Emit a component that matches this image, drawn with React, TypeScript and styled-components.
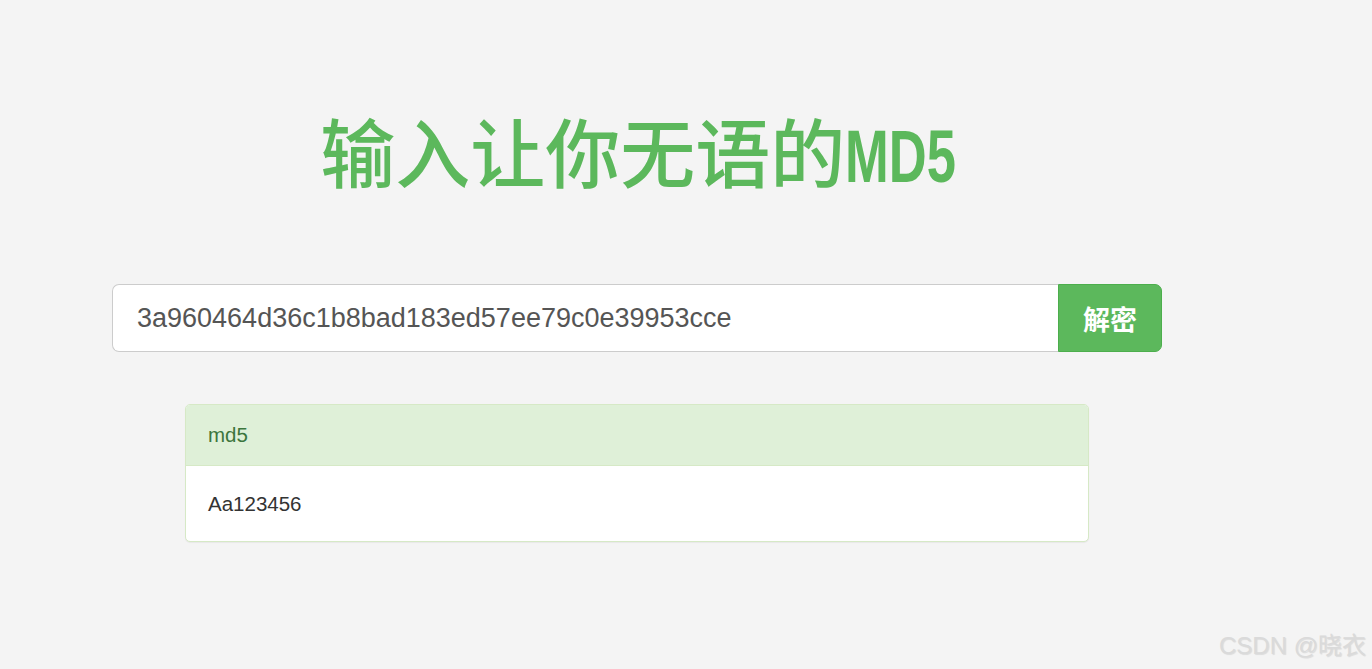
import React from "react";
import styled, { createGlobalStyle } from "styled-components";

const Global = createGlobalStyle`
  html, body { margin: 0; padding: 0; background: #f4f4f4; }
  body { font-family: "Liberation Sans", Arial, "Noto Sans CJK SC", sans-serif; }
`;

const Page = styled.div`
  width: 1372px;
  height: 669px;
  position: relative;
  overflow: hidden;
  background: #f4f4f4;
`;

const Container = styled.div`
  width: 1050px;
  margin-left: 112px;
  padding-top: 104px;
  display: flex;
  flex-direction: column;
`;

const Title = styled.h1`
  margin: 0;
  text-align: center;
  color: #5cb85c;
  font-family: "Noto Sans CJK SC", sans-serif;
  font-weight: 500;
  font-size: 75px;
  line-height: 92px;
  letter-spacing: 0px;
`;

const Latin = styled.span`
  display: inline-block;
  font-family: "Liberation Sans", sans-serif;
  font-weight: 700;
  transform: scaleX(0.7);
  transform-origin: left center;
  margin-right: -50px;
`;

const InputGroup = styled.div`
  display: flex;
  margin-top: 82px;
  height: 68px;
`;

const Input = styled.div`
  flex: 1;
  box-sizing: border-box;
  background: #fff;
  border: 1px solid #cccccc;
  border-right: none;
  border-radius: 7px 0 0 7px;
  padding: 0 24px;
  display: flex;
  align-items: center;
  font-size: 27px;
  color: #555;
`;

const Button = styled.button`
  width: 104px;
  box-sizing: border-box;
  background: #5cb85c;
  border: 1px solid #4cae4c;
  border-radius: 0 7px 7px 0;
  color: #fff;
  font-family: "Noto Sans CJK SC", sans-serif;
  font-weight: 700;
  font-size: 27px;
  padding: 0;
`;

const Panel = styled.div`
  width: 904px;
  margin: 52px auto 0;
  box-sizing: border-box;
  border: 1px solid #d6e9c6;
  border-radius: 5px;
  background: #fff;
  overflow: hidden;
  box-shadow: 0 1px 1px rgba(0, 0, 0, 0.05);
`;

const PanelHeading = styled.div`
  height: 61px;
  box-sizing: border-box;
  background: #dff0d8;
  border-bottom: 1px solid #d6e9c6;
  color: #3c763d;
  font-size: 20.5px;
  padding: 0 22px;
  display: flex;
  align-items: center;
`;

const PanelBody = styled.div`
  height: 75px;
  box-sizing: border-box;
  padding: 0 22px;
  display: flex;
  align-items: center;
  color: #333;
  font-size: 20.5px;
`;

const Watermark = styled.div`
  position: absolute;
  right: 6px;
  bottom: 8px;
  font-family: "Liberation Sans", "Noto Sans CJK SC", sans-serif;
  font-size: 24px;
  font-weight: 400;
  color: #dadada;
  text-shadow: 1px 1px 1px rgba(0, 0, 0, 0.1);
`;

export default function App() {
  return (
    <Page>
      <Global />
      <Container>
        <Title>
          输入让你无语的<Latin>MD5</Latin>
        </Title>
        <InputGroup>
          <Input>3a960464d36c1b8bad183ed57ee79c0e39953cce</Input>
          <Button>解密</Button>
        </InputGroup>
        <Panel>
          <PanelHeading>md5</PanelHeading>
          <PanelBody>Aa123456</PanelBody>
        </Panel>
      </Container>
      <Watermark>CSDN @晓衣</Watermark>
    </Page>
  );
}
